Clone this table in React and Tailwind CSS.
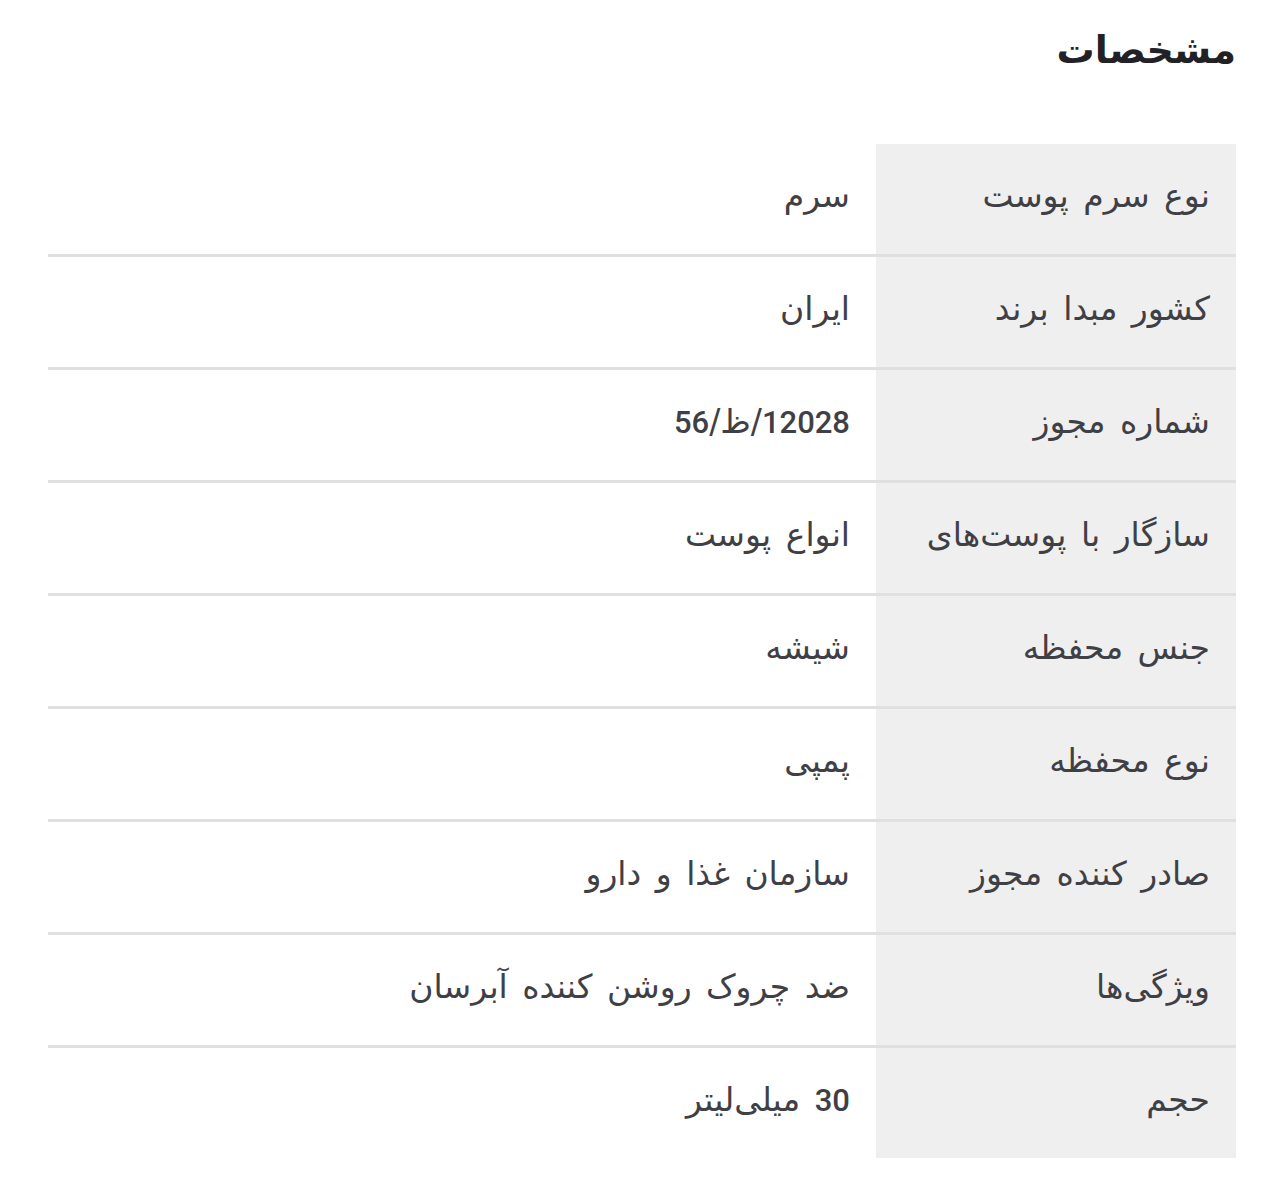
const SPECS = [
  { label: 'نوع سرم پوست', value: 'سرم' },
  { label: 'کشور مبدا برند', value: 'ایران' },
  { label: 'شماره مجوز', value: '12028/ظ/56' },
  { label: 'سازگار با پوست‌های', value: 'انواع پوست' },
  { label: 'جنس محفظه', value: 'شیشه' },
  { label: 'نوع محفظه', value: 'پمپی' },
  { label: 'صادر کننده مجوز', value: 'سازمان غذا و دارو' },
  { label: 'ویژگی‌ها', value: 'ضد چروک روشن کننده آبرسان' },
  { label: 'حجم', value: '30 میلی‌لیتر' },
]

// digits in Roboto, Persian letters in DejaVu Sans
function Mixed({ text }) {
  return (
    <span>
      {text.split(/(\d+)/).map((part, i) =>
        /^\d+$/.test(part) ? (
          <span key={i} style={{ fontFamily: 'Roboto, sans-serif' }} className="text-[31px] font-medium">
            {part}
          </span>
        ) : (
          <span key={i}>{part}</span>
        )
      )}
    </span>
  )
}

export default function App() {
  return (
    <div
      dir="rtl"
      className="min-h-screen bg-white px-12 pt-[26px] text-[#3f4046]"
      style={{ fontFamily: '"DejaVu Sans", sans-serif' }}
    >
      <h2 className="text-[38px] font-bold leading-[48px] text-[#222226]">مشخصات</h2>

      <div className="mt-[70px] flex flex-col">
        {SPECS.map((row, i) => (
          <div
            key={row.label}
            className={
              i < SPECS.length - 1
                ? 'flex h-[113px] border-b-[3px] border-[#e0e0e0]'
                : 'flex h-[110px]'
            }
          >
            <div className="flex w-[360px] shrink-0 items-center bg-[#efefef] pr-[26px] pb-[7px] text-[33px] [word-spacing:4px]">
              {row.label}
            </div>
            <div className="flex flex-1 items-center pr-[26px] pb-[7px] text-[33px] [word-spacing:4px]">
              <Mixed text={row.value} />
            </div>
          </div>
        ))}
      </div>
    </div>
  )
}
